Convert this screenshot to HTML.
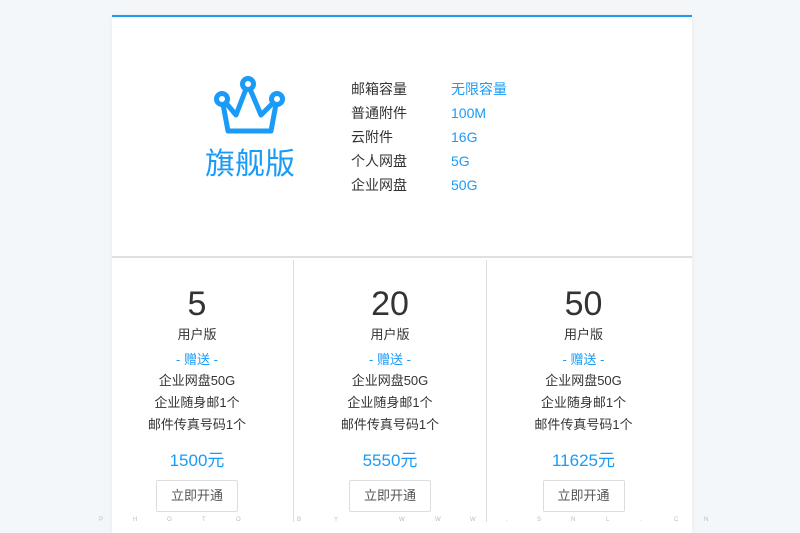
<!DOCTYPE html>
<html><head><meta charset="utf-8"><style>
*{margin:0;padding:0;box-sizing:border-box}
body{width:800px;height:533px;background:#f4f7f9;font-family:"Liberation Sans","Noto Sans CJK SC",sans-serif;position:relative;overflow:hidden}
.card{position:absolute;left:112px;top:15px;width:580px;height:518px;background:#fff;border-top:2px solid #1a9bf7;box-shadow:0 0 6px rgba(0,0,0,.06)}
.top{position:absolute;left:0;top:0;width:580px;height:241px;border-bottom:2px solid #e0e0e0}
.title{position:absolute;left:93px;top:122px;font-size:30px;color:#1a9bf7}
.spec{position:absolute;font-size:14px;line-height:24px}
.k{left:239px;top:60px;color:#333}
.v{left:339px;top:60px;color:#1a9bf7}
.col{position:absolute;top:243px;width:193px;height:262px;text-align:center}
.col.b{border-right:1px solid #ddd}
.n{margin-top:24px;font-size:34px;color:#333;line-height:40px}
.u{font-size:13px;color:#333;margin-top:2px;line-height:18px}
.g{font-size:13px;color:#1a9bf7;margin-top:7px;line-height:18px}
.l{font-size:13px;color:#333;line-height:22px}
.l1{margin-top:1px}
.p{font-size:17px;color:#1a9bf7;margin-top:13px;line-height:24px}
.btn{display:inline-block;width:82px;height:32px;border:1px solid #ddd;border-radius:2px;font-size:13px;color:#555;line-height:30px;margin-top:7px}
.wm{position:absolute;top:517px;font-size:6px;color:#bbb}
</style></head><body>
<div class="card">
<div class="top">
<svg style="position:absolute;left:98px;top:58px" width="80" height="62" viewBox="98 58 80 62">
<g fill="none" stroke="#1a9bf7" stroke-width="5" stroke-linejoin="round">
<circle cx="110" cy="82" r="5.5"/><circle cx="136" cy="67" r="5.5"/><circle cx="165" cy="82" r="5.5"/>
<path d="M114 86 L124 98 L134 72 M138 72 L149 98 L161 86 M111 87 L116 114 L159 114 L164 87"/>
</g></svg>
<div class="title">旗舰版</div>
<div class="spec k">邮箱容量<br>普通附件<br>云附件<br>个人网盘<br>企业网盘</div>
<div class="spec v">无限容量<br>100M<br>16G<br>5G<br>50G</div>
</div>
<div class="col b" style="left:-11px">
<div class="n">5</div><div class="u">用户版</div><div class="g">- 赠送 -</div>
<div class="l l1">企业网盘50G</div><div class="l">企业随身邮1个</div><div class="l">邮件传真号码1个</div>
<div class="p">1500元</div><div class="btn">立即开通</div></div>
<div class="col b" style="left:182px">
<div class="n">20</div><div class="u">用户版</div><div class="g">- 赠送 -</div>
<div class="l l1">企业网盘50G</div><div class="l">企业随身邮1个</div><div class="l">邮件传真号码1个</div>
<div class="p">5550元</div><div class="btn">立即开通</div></div>
<div class="col" style="left:375px">
<div class="n">50</div><div class="u">用户版</div><div class="g">- 赠送 -</div>
<div class="l l1">企业网盘50G</div><div class="l">企业随身邮1个</div><div class="l">邮件传真号码1个</div>
<div class="p">11625元</div><div class="btn">立即开通</div></div>
</div>
<div class="wm" style="left:99px">P</div><div class="wm" style="left:133px">H</div><div class="wm" style="left:167px">O</div><div class="wm" style="left:202px">T</div><div class="wm" style="left:236px">O</div>
<div class="wm" style="left:297px">B</div><div class="wm" style="left:334px">Y</div><div class="wm" style="left:399px">W</div><div class="wm" style="left:435px">W</div><div class="wm" style="left:470px">W</div>
<div class="wm" style="left:506px">.</div><div class="wm" style="left:537px">S</div><div class="wm" style="left:571px">N</div><div class="wm" style="left:606px">L</div><div class="wm" style="left:640px">.</div><div class="wm" style="left:674px">C</div><div class="wm" style="left:704px">N</div>
</body></html>
